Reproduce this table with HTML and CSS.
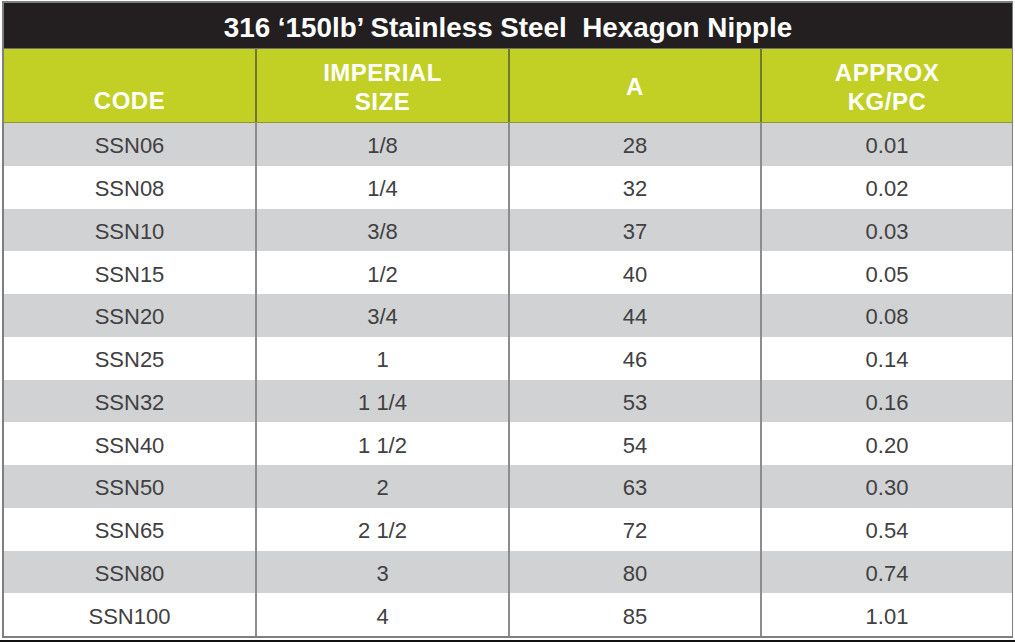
FILE: index.html
```html
<!DOCTYPE html>
<html>
<head>
<meta charset="utf-8">
<link rel="stylesheet" href="styles.css">
</head>
<body>
<div class="frame">
  <div class="title">316 ‘150lb’ Stainless Steel&nbsp; Hexagon Nipple</div>
  <div class="row head">
    <div class="cell bottom">CODE</div>
    <div class="cell">IMPERIAL<br>SIZE</div>
    <div class="cell">A</div>
    <div class="cell">APPROX<br>KG/PC</div>
  </div>
  <div class="row gray"><div class="cell">SSN06</div><div class="cell">1/8</div><div class="cell">28</div><div class="cell">0.01</div></div>
  <div class="row"><div class="cell">SSN08</div><div class="cell">1/4</div><div class="cell">32</div><div class="cell">0.02</div></div>
  <div class="row gray"><div class="cell">SSN10</div><div class="cell">3/8</div><div class="cell">37</div><div class="cell">0.03</div></div>
  <div class="row"><div class="cell">SSN15</div><div class="cell">1/2</div><div class="cell">40</div><div class="cell">0.05</div></div>
  <div class="row gray"><div class="cell">SSN20</div><div class="cell">3/4</div><div class="cell">44</div><div class="cell">0.08</div></div>
  <div class="row"><div class="cell">SSN25</div><div class="cell">1</div><div class="cell">46</div><div class="cell">0.14</div></div>
  <div class="row gray"><div class="cell">SSN32</div><div class="cell">1 1/4</div><div class="cell">53</div><div class="cell">0.16</div></div>
  <div class="row"><div class="cell">SSN40</div><div class="cell">1 1/2</div><div class="cell">54</div><div class="cell">0.20</div></div>
  <div class="row gray"><div class="cell">SSN50</div><div class="cell">2</div><div class="cell">63</div><div class="cell">0.30</div></div>
  <div class="row"><div class="cell">SSN65</div><div class="cell">2 1/2</div><div class="cell">72</div><div class="cell">0.54</div></div>
  <div class="row gray"><div class="cell">SSN80</div><div class="cell">3</div><div class="cell">80</div><div class="cell">0.74</div></div>
  <div class="row"><div class="cell">SSN100</div><div class="cell">4</div><div class="cell">85</div><div class="cell">1.01</div></div>
</div>
<div class="edge"></div>
</body>
</html>
```

FILE: styles.css
```css
html, body {
  margin: 0;
  padding: 0;
  background: #ffffff;
}
body {
  width: 1015px;
  height: 643px;
  overflow: hidden;
  font-family: "Liberation Sans", Arial, sans-serif;
}
.frame {
  margin: 1px 2px 0 2px;
  border: 2px solid #7f7f7f;
  border-right-width: 1px;
  background: #ffffff;
}
.title {
  height: 45px;
  background: #231f20;
  border-bottom: 1px solid #6f6f6f;
  color: #ffffff;
  font-weight: bold;
  font-size: 27.8px;
  line-height: 50px;
  text-align: center;
}
.row {
  display: grid;
  grid-template-columns: 251px 251px 250px 1fr;
  column-gap: 2px;
  background: #8c8c8c;
  height: 42.75px;
}
.row .cell {
  background: #ffffff;
  color: #414042;
  font-size: 22px;
  display: flex;
  align-items: center;
  justify-content: center;
  text-align: center;
  padding-top: 4px;
  box-sizing: border-box;
}
.row.gray .cell {
  background: #d1d2d4;
}
.row.head {
  height: 73px;
  background: #6f7a2a;
  border-bottom: 1px solid #8d963e;
}
.row.head .cell {
  background: #c2d026;
  color: #ffffff;
  font-weight: bold;
  font-size: 24px;
  letter-spacing: 0.5px;
  line-height: 29px;
  padding-top: 2px;
}
.row.head .cell.bottom {
  align-items: flex-end;
  padding-bottom: 7px;
}
.edge {
  margin-top: 2px;
  height: 2px;
  background: #111111;
}
```
